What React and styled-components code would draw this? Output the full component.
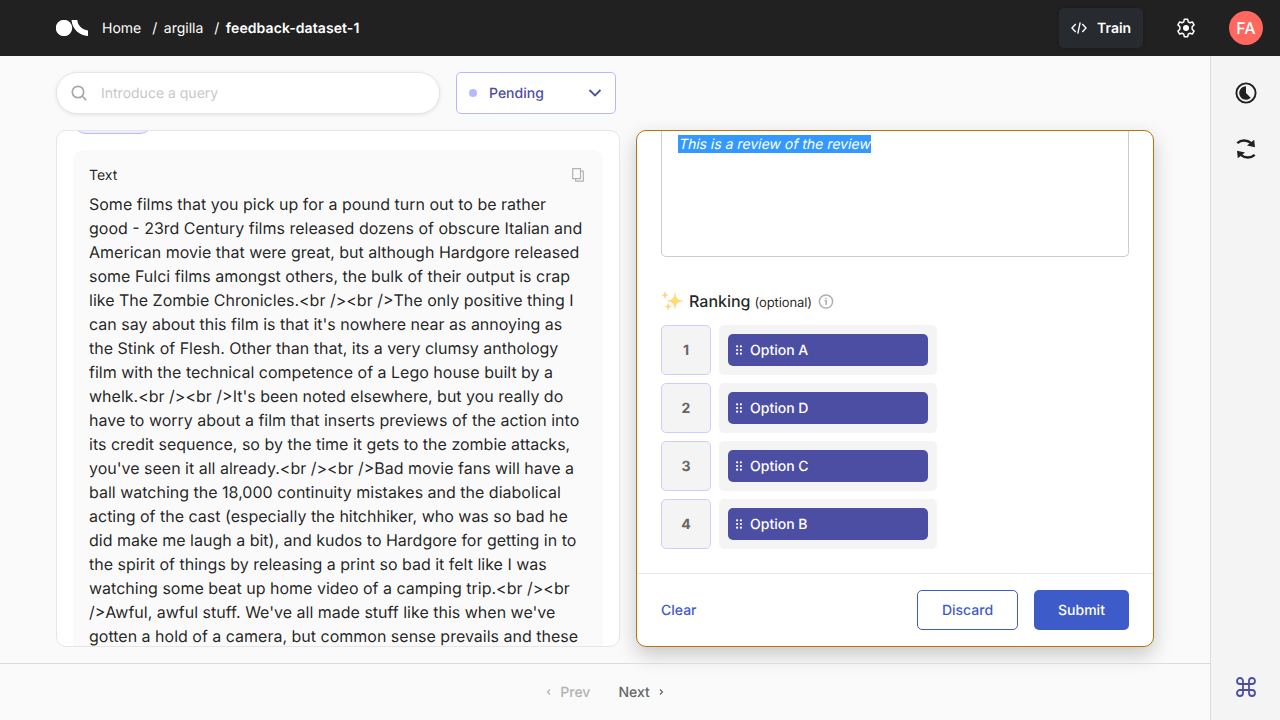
import React from "react";
import styled, { createGlobalStyle, css } from "styled-components";

const GlobalStyle = createGlobalStyle`
  * { box-sizing: border-box; }
  body {
    margin: 0;
    background: #fafafa;
    color: rgba(0, 0, 0, 0.87);
    font-family: Inter, "Liberation Sans", sans-serif;
    font-size: 14px;
    line-height: 17px;
    text-rendering: geometricPrecision;
    overflow: hidden;
  }
  button { font: inherit; text-rendering: inherit; cursor: pointer; }
  svg { display: block; flex-shrink: 0; }
`;

const Page = styled.div`
  display: flex;
  flex-direction: column;
  height: 100vh;
`;

const Header = styled.header`
  display: flex;
  align-items: center;
  height: 56px;
  flex-shrink: 0;
  padding: 0 17px 0 56px;
  background: #212121;
  color: #fff;
`;

const Breadcrumbs = styled.nav`
  display: flex;
  margin-left: 14px;
  flex: 1;
`;

const Crumb = styled.span`
  color: #fff;
  font-weight: ${(p) => (p.$current ? 600 : 400)};
  letter-spacing: ${(p) => (p.$current ? "0.08px" : "0")};
`;

const Slash = styled.span`
  margin: 0 6.5px 0 11px;
`;

const TrainButton = styled.button`
  display: flex;
  align-items: center;
  gap: 10px;
  width: 84px;
  height: 40px;
  padding: 0 12px;
  border: 0;
  border-radius: 5px;
  background: #272a2e;
  color: #fff;
  font-weight: 600;
  box-shadow: 0 0 4px rgba(0, 0, 0, 0.2);
`;

const SettingsLink = styled.a`
  margin: 0 33px;
`;

const Avatar = styled.div`
  display: flex;
  align-items: center;
  justify-content: center;
  width: 34px;
  height: 34px;
  border-radius: 50%;
  background: #ff675f;
  font-size: 16px;
  font-weight: 500;
  line-height: 18px;
`;

const Body = styled.div`
  display: flex;
  flex: 1;
  min-height: 0;
`;

const Main = styled.main`
  display: flex;
  flex-direction: column;
  flex: 1;
  min-width: 0;
`;

const Filters = styled.div`
  display: flex;
  gap: 16px;
  padding: 16px 56px;
`;

const SearchBox = styled.div`
  display: flex;
  align-items: center;
  gap: 14px;
  width: 384px;
  height: 42px;
  padding: 0 14px;
  border: 1px solid #e6e6e6;
  border-radius: 21px;
  background: #fff;
  color: #c8c8c8;
  box-shadow: 0 1px 4px rgba(0, 0, 0, 0.09);
`;

const StatusSelect = styled.button`
  display: flex;
  align-items: center;
  width: 160px;
  height: 42px;
  padding: 0 13px 0 12px;
  border: 1px solid #b7b9ff;
  border-radius: 5px;
  background: #fff;
  color: #4c4ea3;
  font-weight: 500;
  text-align: left;
`;

const StatusDot = styled.span`
  width: 8px;
  height: 8px;
  margin-right: 12px;
  border-radius: 50%;
  background: #b7b9ff;
`;

const StatusLabel = styled.span`
  flex: 1;
`;

const Panels = styled.div`
  display: flex;
  gap: 16px;
  height: 517px;
  padding: 0 56px;
`;

const RecordPanel = styled.section`
  display: flex;
  flex-direction: column;
  justify-content: flex-start;
  width: 564px;
  padding: 0 16px;
  border: 1px solid #e6e6e6;
  border-radius: 10px;
  background: #fff;
  overflow: hidden;
`;

const StatusTag = styled.div`
  flex-shrink: 0;
  width: 80px;
  height: 28px;
  margin-top: -25px;
  margin-bottom: 16px;
  border: 1px solid #b7b9ff;
  border-radius: 13px;
  background: #eeeeff;
`;

const TextField = styled.article`
  flex-shrink: 0;
  padding: 16px 16px 48px;
  border-radius: 10px;
  background: #fafafa;
`;

const FieldHeader = styled.div`
  display: flex;
  align-items: center;
  justify-content: space-between;
  height: 18px;
  margin-bottom: 8px;
  padding-right: 3px;
`;

const FieldText = styled.p`
  margin: 0;
  font-size: 16px;
  line-height: 24px;
`;

const FormPanel = styled.section`
  display: flex;
  flex-direction: column;
  width: 518px;
  border: 1px solid #bb720a;
  border-radius: 10px;
  background: #fff;
  overflow: hidden;
  box-shadow: 0 8px 20px rgba(0, 0, 0, 0.2);
`;

const Questions = styled.div`
  display: flex;
  flex-direction: column;
  flex: 1;
  padding: 0 24px;
  min-height: 0;
`;

const ReviewInput = styled.div`
  flex-shrink: 0;
  height: 126px;
  padding: 4px 16px;
  border: 1px solid #ccc;
  border-top: 0;
  border-radius: 0 0 5px 5px;
`;

const Selected = styled.span`
  display: block;
  width: 193px;
  height: 18px;
  padding-top: 1px;
  background: #3399ff;
  color: #fff;
  letter-spacing: -0.01px;
  white-space: nowrap;
`;

const Slanted = styled.span`
  display: inline-block;
  transform: skewX(-12deg);
  transform-origin: 0 80%;
`;

const QuestionTitle = styled.div`
  display: flex;
  align-items: center;
  height: 24px;
  margin: 32px 0 12px;
  font-size: 16px;
  font-weight: 500;
  line-height: 18px;
`;

const TitleText = styled.span`
  margin: 0 4px 0 6px;
`;

const Optional = styled.span`
  margin: 4px 6px 0 0;
  font-size: 13px;
  font-weight: 400;
  letter-spacing: -0.1px;
`;

const RankList = styled.div`
  display: grid;
  gap: 8px;
`;

const RankRow = styled.div`
  display: flex;
  gap: 8px;
  height: 50px;
`;

const RankNumber = styled.div`
  display: flex;
  align-items: center;
  justify-content: center;
  width: 50px;
  border: 1px solid #cdcdff;
  border-radius: 5px;
  background: #f4f4f4;
  color: #666;
  font-weight: 700;
`;

const RankSlot = styled.div`
  width: 218px;
  padding: 9px;
  border-radius: 5px;
  background: #f4f4f4;
`;

const RankItem = styled.div`
  display: flex;
  align-items: center;
  gap: 8px;
  height: 32px;
  padding: 0 8px;
  border-radius: 5px;
  background: #4c4ea3;
  color: #fff;
  font-weight: 500;
`;

const FormActions = styled.div`
  display: flex;
  align-items: center;
  gap: 16px;
  height: 73px;
  padding: 0 24px;
  border-top: 1px solid #e6e6e6;
`;

const ActionButton = styled.button`
  height: 40px;
  padding: 0;
  border: 1px solid transparent;
  border-radius: 5px;
  background: transparent;
  color: #3e5cc9;
  font-weight: 500;
  ${(p) =>
    p.$variant === "text" &&
    css`
      margin-right: auto;
      border: 0;
    `}
  ${(p) =>
    p.$variant === "outline" &&
    css`
      width: 101px;
      border-color: #3e5cc9;
    `}
  ${(p) =>
    p.$variant === "primary" &&
    css`
      width: 95px;
      background: #3e5cc9;
      color: #fff;
    `}
`;

const Pagination = styled.footer`
  display: flex;
  align-items: center;
  justify-content: center;
  gap: 28px;
  height: 57px;
  margin-top: 16px;
  border-top: 1px solid #dcdcdc;
`;

const PageLink = styled.a`
  display: flex;
  align-items: center;
  gap: 9px;
  color: ${(p) => (p.$disabled ? "#b2b2b2" : "#666")};
  font-weight: 500;
`;

const Sidebar = styled.aside`
  display: flex;
  flex-direction: column;
  align-items: center;
  width: 70px;
  padding: 25px 0 21px;
  border-left: 1px solid #dcdcdc;
  background: #f4f4f4;
`;

const SidebarIcon = styled.a`
  display: flex;
  align-items: center;
  justify-content: center;
  width: 24px;
  height: 24px;
  margin-bottom: ${(p) => (p.$last ? 0 : 32)}px;
  margin-top: ${(p) => (p.$last ? "auto" : 0)};
`;

const Logo = () => (
  <svg width="32" height="16" viewBox="0 0 32 16" fill="#fff">
    <circle cx="8" cy="8" r="8.2" />
    <path d="M15.5 0h5.8c.5 5.6 4.7 9.7 10.7 10.4V16c-9-.6-15.8-7-16.5-16z" />
  </svg>
);

const CodeIcon = () => (
  <svg width="16" height="14" viewBox="0 0 16 14" fill="none" stroke="#fff" strokeWidth="1.4">
    <path d="M4.7 3 1 7l3.7 4M11.3 3 15 7l-3.7 4M9.2 1.3 6.8 12.7" />
  </svg>
);

const GearIcon = () => (
  <svg width="20" height="20" viewBox="0 0 20 20">
    <path
      d="M8.3 1.3h3.4l.55 2.5 1.65.95 2.45-.8 1.7 2.95-1.9 1.85v2.5l1.9 1.85-1.7 2.95-2.45-.8-1.65.95-.55 2.5H8.3l-.55-2.5-1.65-.95-2.45.8-1.7-2.95 1.9-1.85v-2.5L1.95 6.9l1.7-2.95 2.45.8 1.65-.95z"
      fill="none"
      stroke="#fff"
      strokeWidth="1.5"
      strokeLinejoin="round"
    />
    <circle cx="10" cy="10" r="3" fill="#fff" />
  </svg>
);

const SearchIcon = () => (
  <svg width="16" height="16" viewBox="0 0 16 16" fill="none" stroke="#a8a8a8" strokeWidth="1.7">
    <circle cx="7" cy="7" r="5.7" />
    <path d="m11 11 4.2 4.2" />
  </svg>
);

const Chevron = ({ d, w, h, stroke = 1.8, color = "currentColor" }) => (
  <svg width={w} height={h} viewBox={`0 0 ${w} ${h}`} fill="none" stroke={color} strokeWidth={stroke}>
    <path d={d} />
  </svg>
);

const CopyIcon = () => (
  <svg width="12" height="14" viewBox="0 0 12 14" fill="none" stroke="#b2b2b2" strokeWidth="1.2">
    <path d="M.7.7h7.8v10H.7zM8.5 3.2h2.8v10H3.6v-2.5" />
  </svg>
);

const Sparkles = () => (
  <svg width="22" height="20" viewBox="0 0 22 20">
    <path
      d="M14 2.2c.9 5.2 2.2 6.8 7.5 7.7-5.3.9-6.6 2.5-7.5 7.7-.9-5.2-2.2-6.8-7.5-7.7 5.3-.9 6.6-2.5 7.5-7.7z"
      fill="#ffdc6e"
      stroke="#fbd08a"
      strokeWidth=".5"
    />
    <path
      d="M4 .8c.3 2.2.8 2.9 2.7 3.3C4.8 4.5 4.3 5.2 4 7.4c-.3-2.2-.8-2.9-2.7-3.3C3.2 3.7 3.7 3 4 .8zM7.2 12.3c.3 2.2.9 2.9 2.9 3.3-2 .4-2.6 1.1-2.9 3.3-.3-2.2-.9-2.9-2.9-3.3 2-.4 2.6-1.1 2.9-3.3z"
      fill="#ffd76a"
      stroke="#fbc98a"
      strokeWidth=".5"
    />
  </svg>
);

const InfoIcon = () => (
  <svg width="16" height="16" viewBox="0 0 16 16" fill="none" stroke="#b0b0b0" strokeWidth="1.5">
    <circle cx="8" cy="8.5" r="6.6" />
    <path d="M6.6 7.7H8.2V12.1M8 4.7v1.5" />
  </svg>
);

const DragIcon = () => (
  <svg width="6" height="10" viewBox="0 0 6 10" fill="#fff">
    {[1.3, 5, 8.7].map((y) => (
      <React.Fragment key={y}>
        <circle cx="1.1" cy={y} r="1.1" />
        <circle cx="4.9" cy={y} r="1.1" />
      </React.Fragment>
    ))}
  </svg>
);

const ProgressIcon = () => (
  <svg width="22" height="22" viewBox="0 0 22 22">
    <circle cx="11" cy="11" r="9.6" fill="none" stroke="#212121" strokeWidth="1.9" />
    <path d="M11 4.3V11l4.7 4.7A6.7 6.7 0 1 1 11 4.3z" fill="#212121" />
  </svg>
);

const RefreshIcon = () => (
  <svg width="20" height="22" viewBox="0 0 20 22" fill="none" stroke="#212121" strokeWidth="2.4">
    <path d="M1.3 5.2C5 1.8 11 1.5 15.5 5.4M18.7 16.8C15 20.2 9 20.5 4.5 16.6" />
    <path d="m18.2 1.7.8 7.5-8-1.6zM1.8 20.3 1 12.8l8 1.6z" fill="#212121" stroke="none" />
  </svg>
);

const CommandIcon = () => (
  <svg width="20" height="20" viewBox="0 0 20 20" fill="none" stroke="#4c4ea3" strokeWidth="1.8">
    <path d="M7 7V4a3 3 0 1 0-3 3h12a3 3 0 1 0-3-3v12a3 3 0 1 0 3-3H4a3 3 0 1 0 3 3z" />
  </svg>
);

const REVIEW_TEXT =
  "Some films that you pick up for a pound turn out to be rather good - 23rd Century films released dozens of obscure Italian and American movie that were great, but although Hardgore released some Fulci films amongst others, the bulk of their output is crap like The Zombie Chronicles.<br /><br />The only positive thing I can say about this film is that it's nowhere near as annoying as the Stink of Flesh. Other than that, its a very clumsy anthology film with the technical competence of a Lego house built by a whelk.<br /><br />It's been noted elsewhere, but you really do have to worry about a film that inserts previews of the action into its credit sequence, so by the time it gets to the zombie attacks, you've seen it all already.<br /><br />Bad movie fans will have a ball watching the 18,000 continuity mistakes and the diabolical acting of the cast (especially the hitchhiker, who was so bad he did make me laugh a bit), and kudos to Hardgore for getting in to the spirit of things by releasing a print so bad it felt like I was watching some beat up home video of a camping trip.<br /><br />Awful, awful stuff. We've all made stuff like this when we've gotten a hold of a camera, but common sense prevails and these";

const OPTIONS = ["Option A", "Option D", "Option C", "Option B"];

export default function App() {
  return (
    <Page>
      <GlobalStyle />
      <Header>
        <Logo />
        <Breadcrumbs>
          <Crumb>Home</Crumb>
          <Slash>/</Slash>
          <Crumb>argilla</Crumb>
          <Slash>/</Slash>
          <Crumb $current>feedback-dataset-1</Crumb>
        </Breadcrumbs>
        <TrainButton>
          <CodeIcon />
          Train
        </TrainButton>
        <SettingsLink>
          <GearIcon />
        </SettingsLink>
        <Avatar>FA</Avatar>
      </Header>
      <Body>
        <Main>
          <Filters>
            <SearchBox>
              <SearchIcon />
              Introduce a query
            </SearchBox>
            <StatusSelect>
              <StatusDot />
              <StatusLabel>Pending</StatusLabel>
              <Chevron w={14} h={8} d="M1.5 1 7 6.5 12.5 1" />
            </StatusSelect>
          </Filters>
          <Panels>
            <RecordPanel>
              <StatusTag />
              <TextField>
                <FieldHeader>
                  Text
                  <CopyIcon />
                </FieldHeader>
                <FieldText>{REVIEW_TEXT}</FieldText>
              </TextField>
            </RecordPanel>
            <FormPanel>
              <Questions>
                <ReviewInput>
                  <Selected>
                    <Slanted>This is a review of the review</Slanted>
                  </Selected>
                </ReviewInput>
                <QuestionTitle>
                  <Sparkles />
                  <TitleText>Ranking</TitleText>
                  <Optional>(optional)</Optional>
                  <InfoIcon />
                </QuestionTitle>
                <RankList>
                  {OPTIONS.map((option, i) => (
                    <RankRow key={option}>
                      <RankNumber>{i + 1}</RankNumber>
                      <RankSlot>
                        <RankItem>
                          <DragIcon />
                          {option}
                        </RankItem>
                      </RankSlot>
                    </RankRow>
                  ))}
                </RankList>
              </Questions>
              <FormActions>
                <ActionButton $variant="text">Clear</ActionButton>
                <ActionButton $variant="outline">Discard</ActionButton>
                <ActionButton $variant="primary">Submit</ActionButton>
              </FormActions>
            </FormPanel>
          </Panels>
          <Pagination>
            <PageLink $disabled>
              <Chevron w={5} h={8} stroke={1.2} d="M4 1.5 1.5 4 4 6.5" />
              Prev
            </PageLink>
            <PageLink>
              Next
              <Chevron w={5} h={8} stroke={1.2} d="M1 1.5 3.5 4 1 6.5" />
            </PageLink>
          </Pagination>
        </Main>
        <Sidebar>
          <SidebarIcon>
            <ProgressIcon />
          </SidebarIcon>
          <SidebarIcon>
            <RefreshIcon />
          </SidebarIcon>
          <SidebarIcon $last>
            <CommandIcon />
          </SidebarIcon>
        </Sidebar>
      </Body>
    </Page>
  );
}
